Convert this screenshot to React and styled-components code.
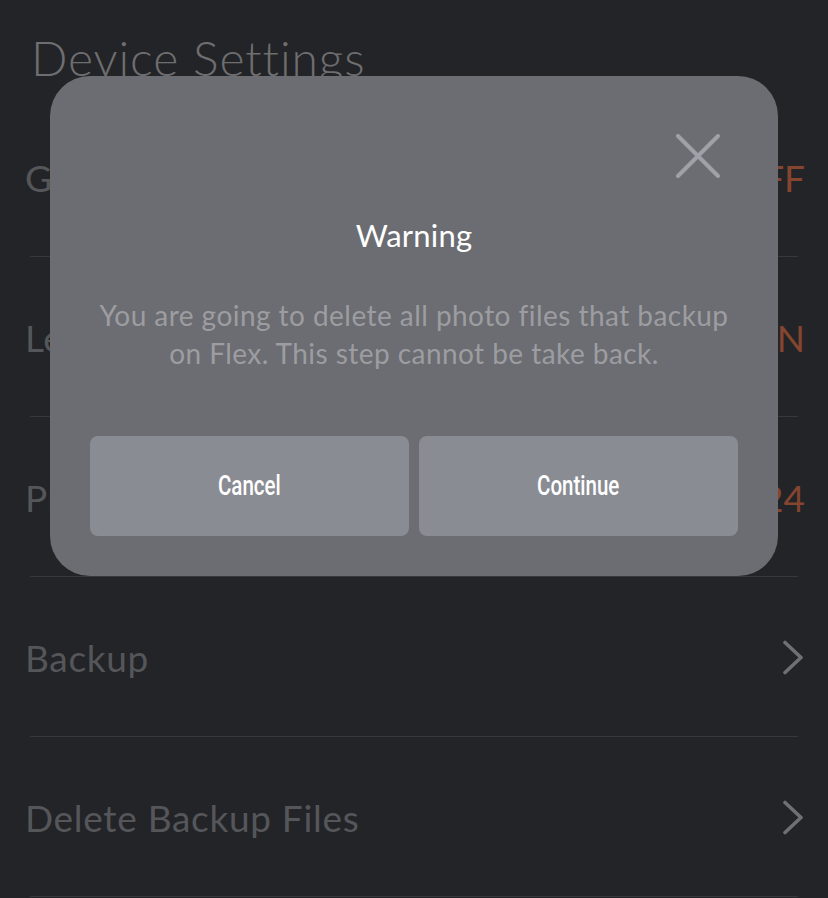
import React from "react";
import styled, { createGlobalStyle } from "styled-components";

const Global = createGlobalStyle`
  html, body { margin: 0; padding: 0; background: #232427; }
  body { font-family: Lato, "Open Sans", sans-serif; }
  * { box-sizing: border-box; }
`;

const Screen = styled.div`
  position: relative;
  width: 828px;
  height: 898px;
  overflow: hidden;
  background: #232427;
`;

const Header = styled.div`
  height: 97px;
  padding: 29px 0 0 31px;
`;

const Title = styled.h1`
  margin: 0;
  font-family: Lato, sans-serif;
  font-weight: 300;
  font-size: 48px;
  line-height: 1.2;
  letter-spacing: 0.9px;
  color: #6e6e71;
`;

const List = styled.div`
  display: flex;
  flex-direction: column;
`;

const Row = styled.div`
  position: relative;
  height: 160px;
  display: flex;
  align-items: center;
  justify-content: space-between;
  padding: 0 23px 0 25px;
  &::after {
    content: "";
    position: absolute;
    left: 30px;
    right: 30px;
    bottom: 0;
    height: 1px;
    background: #38393d;
  }
`;

const Label = styled.span`
  font-family: Lato, sans-serif;
  font-weight: 400;
  font-size: 37px;
  letter-spacing: 0.7px;
  color: #55565a;
`;

const Value = styled.span`
  font-family: Lato, sans-serif;
  font-weight: 400;
  font-size: 37px;
  color: #85452f;
`;

const ChevronIcon = styled.svg`
  margin-right: 1px;
`;

const Chevron = () => (
  <ChevronIcon width="22" height="35" viewBox="0 0 22 35">
    <path d="M3 2.5 L19 17.5 L3 32.5" fill="none" stroke="#707073" strokeWidth="3.6" strokeLinecap="round" strokeLinejoin="round" />
  </ChevronIcon>
);

const Overlay = styled.div`
  position: absolute;
  inset: 0;
  display: flex;
  justify-content: center;
  align-items: flex-start;
  padding-top: 76px;
`;

const Modal = styled.div`
  position: relative;
  width: 728px;
  height: 500px;
  border-radius: 40px;
  background: #6b6d72;
  display: flex;
  flex-direction: column;
  align-items: center;
  padding: 141px 40px 40px;
`;

const Close = styled.button`
  position: absolute;
  top: 58px;
  right: 58px;
  width: 44px;
  height: 44px;
  padding: 0;
  border: none;
  background: transparent;
  display: flex;
  align-items: center;
  justify-content: center;
`;

const ModalTitle = styled.h2`
  margin: 0;
  font-family: Lato, sans-serif;
  font-weight: 400;
  font-size: 31px;
  line-height: 1.2;
  letter-spacing: 0.2px;
  color: #ffffff;
`;

const Message = styled.p`
  margin: 42px 0 0;
  font-family: Lato, sans-serif;
  font-weight: 400;
  font-size: 28px;
  line-height: 38px;
  letter-spacing: 0.45px;
  text-align: center;
  color: #9d9da1;
`;

const Actions = styled.div`
  margin-top: auto;
  width: 100%;
  display: grid;
  grid-template-columns: 1fr 1fr;
  gap: 10px;
`;

const ActionButton = styled.button`
  height: 100px;
  border: none;
  border-radius: 8px;
  background: #8a8c93;
  display: flex;
  align-items: center;
  justify-content: center;
  padding: 0;
`;

const ActionText = styled.span`
  display: inline-block;
  font-family: Roboto, "Liberation Sans", sans-serif;
  font-weight: 500;
  font-size: 27px;
  color: #ffffff;
  transform: scaleX(0.76);
`;

const rows = [
  { label: "GPS", value: "OFF" },
  { label: "Lens", value: "ON" },
  { label: "Preview", value: "1024" },
  { label: "Backup", chevron: true },
  { label: "Delete Backup Files", chevron: true },
];

export default function App() {
  return (
    <Screen>
      <Global />
      <Header>
        <Title>Device Settings</Title>
      </Header>
      <List>
        {rows.map((r) => (
          <Row key={r.label}>
            <Label>{r.label}</Label>
            {r.chevron ? <Chevron /> : <Value>{r.value}</Value>}
          </Row>
        ))}
      </List>
      <Overlay>
        <Modal>
          <Close aria-label="Close">
            <svg width="44" height="44" viewBox="0 0 44 44">
              <path d="M2 2 L42 42 M42 2 L2 42" stroke="#a19fa8" strokeWidth="4" strokeLinecap="round" />
            </svg>
          </Close>
          <ModalTitle>Warning</ModalTitle>
          <Message>
            You are going to delete all photo files that backup
            <br />
            on Flex. This step cannot be take back.
          </Message>
          <Actions>
            <ActionButton>
              <ActionText>Cancel</ActionText>
            </ActionButton>
            <ActionButton>
              <ActionText>Continue</ActionText>
            </ActionButton>
          </Actions>
        </Modal>
      </Overlay>
    </Screen>
  );
}
